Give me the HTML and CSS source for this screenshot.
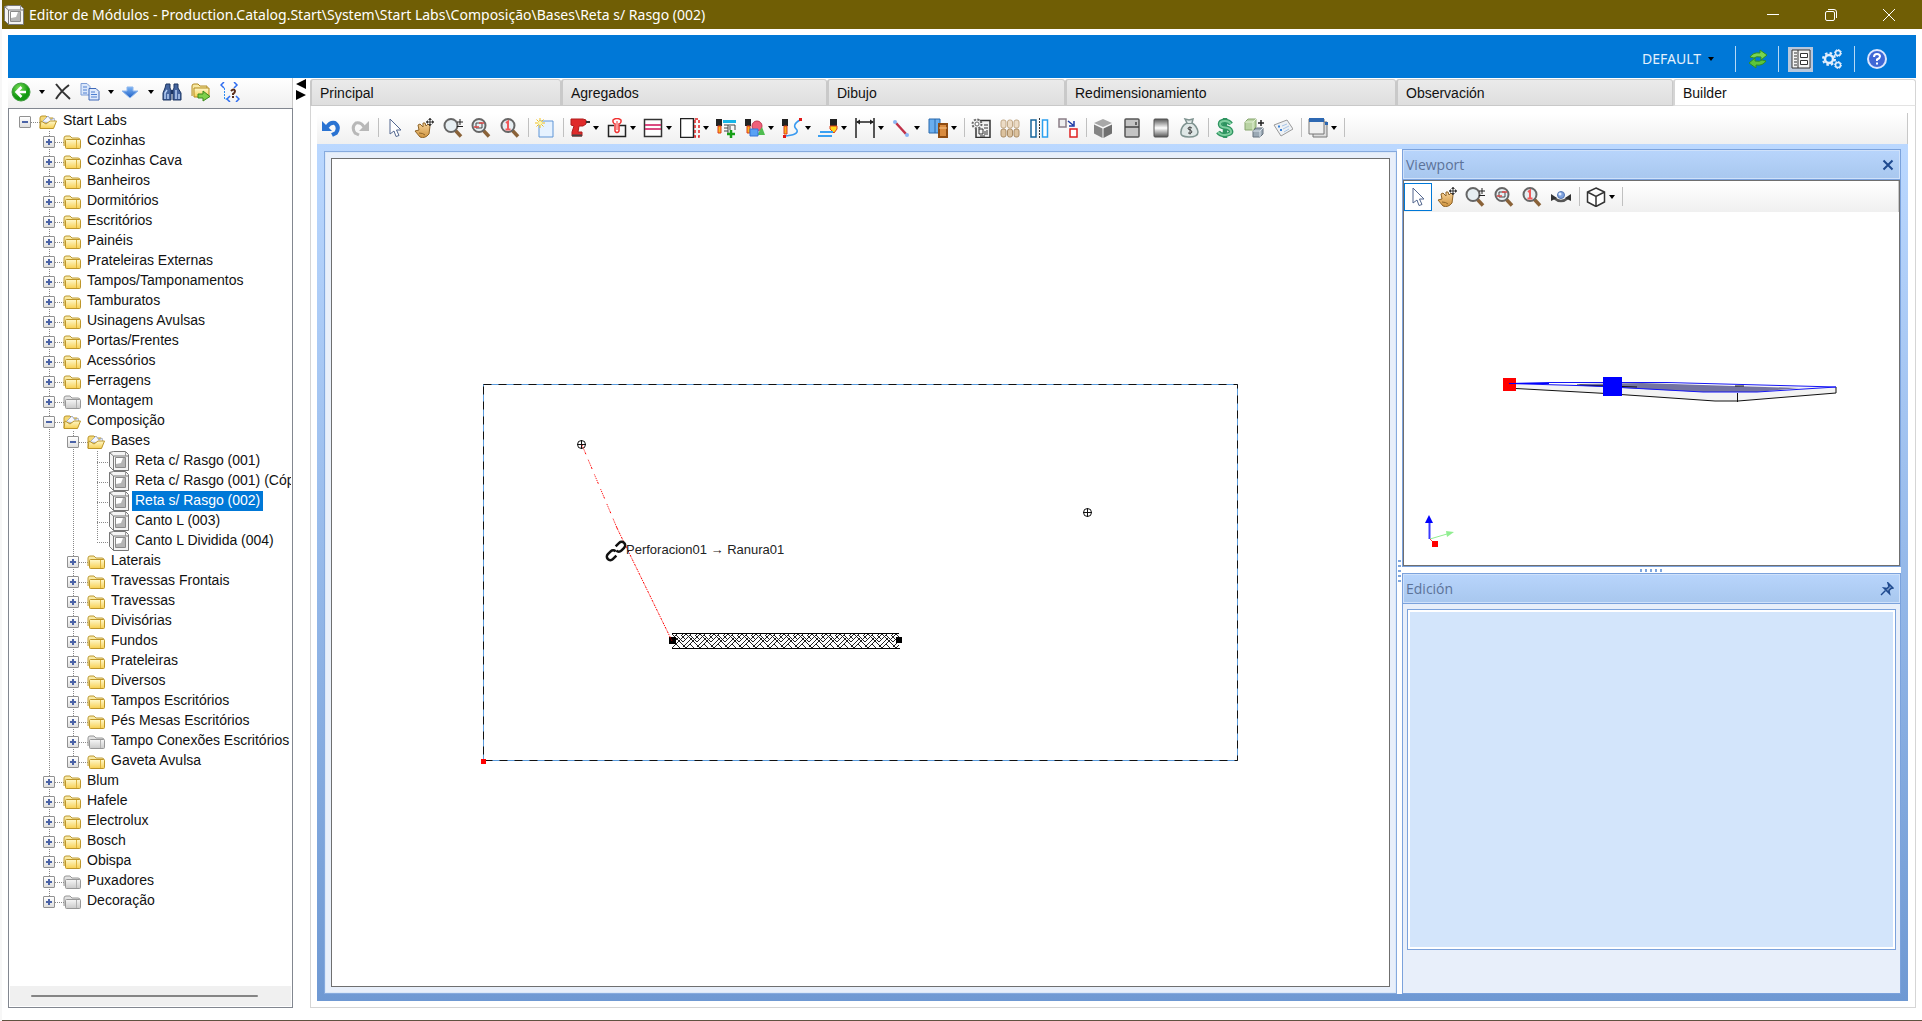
FILE: index.html
```html
<!DOCTYPE html>
<html lang="pt">
<head>
<meta charset="utf-8">
<title>Editor de Módulos</title>
<link rel="stylesheet" href="styles.css">
</head>
<body>
<svg class="defs" aria-hidden="true">
  <defs>
    <linearGradient id="gold" x1="0" y1="0" x2="0" y2="1"><stop offset="0" stop-color="#fff9cc"/><stop offset="1" stop-color="#f7cf52"/></linearGradient>
    <linearGradient id="silver" x1="0" y1="0" x2="0" y2="1"><stop offset="0" stop-color="#f7f7f7"/><stop offset="1" stop-color="#c9c9c9"/></linearGradient>
    <linearGradient id="skin" x1="0" y1="0" x2="0" y2="1"><stop offset="0" stop-color="#f6d39a"/><stop offset="1" stop-color="#cf933e"/></linearGradient>
    <linearGradient id="blueg" x1="0" y1="0" x2="0" y2="1"><stop offset="0" stop-color="#7db4f5"/><stop offset="1" stop-color="#1e5fc4"/></linearGradient>
    <linearGradient id="shine" x1="0" y1="0" x2="0" y2="1"><stop offset="0" stop-color="#555"/><stop offset=".5" stop-color="#fff"/><stop offset="1" stop-color="#555"/></linearGradient>
    <radialGradient id="greeng" cx=".4" cy=".3"><stop offset="0" stop-color="#7be05a"/><stop offset="1" stop-color="#149a12"/></radialGradient>
    <pattern id="weave" width="14" height="15" patternUnits="userSpaceOnUse" x="672" y="633">
      <path d="M0 6L4 2L11 9M4 2L6 0M11 9L14 6M0 1L7 8M0 11L7 4M3 4L0 1M7 8L14 1M9 2L14 7M0 15L4 11L8 15M4 11L11 4M7 8L14 15M11 14L14 11M9 0L11 2" stroke="#222" fill="none"/>
    </pattern>
  </defs>
  <symbol id="folder" viewBox="0 0 18 16"><path d="M1 12V4q0-2 2-2h4l2 2h6q2 0 2 2v6" fill="#f8e9a4" stroke="#bd9a35"/><rect x="2.500" y="5.500" width="15" height="9" rx="1" fill="url(#gold)" stroke="#bd962a"/><path d="M13.500 6v8" stroke="#dcb23d"/></symbol>
  <symbol id="folder-off" viewBox="0 0 18 16"><path d="M1 12V4q0-2 2-2h4l2 2h6q2 0 2 2v6" fill="#e2e2e2" stroke="#979797"/><rect x="2.500" y="5.500" width="15" height="9" rx="1" fill="url(#silver)" stroke="#979797"/><path d="M13.500 6v8" stroke="#b0b0b0"/></symbol>
  <symbol id="folder-open" viewBox="0 0 18 16"><path d="M1 14V4q0-2 2-2h4l2 2h5v10z" fill="#f3d878" stroke="#bd962a"/><path d="M3 8l6-6 3 4 3-2 1 5z" fill="#f6f8ff" stroke="#a5afc8"/><path d="M2 7l5 3 4-3h6.500l-3 7.500H1z" fill="url(#gold)" stroke="#bd962a"/></symbol>
  <symbol id="module" viewBox="0 0 20 20"><path d="M.5 1.500l4-1h12l3 3v16h-15l-4-4z" fill="#f4f4f4" stroke="#777"/><path d="M.5 1.500l4 3.500h15M4.500 5v14.500" fill="none" stroke="#777"/><path d="M16.500 .5V5" stroke="#999"/><path d="M6.500 6.500h10v10h-10z" fill="#fff" stroke="#8a8a8a"/><path d="M7 16v-3l5-1 2-5h2v9z" fill="#b4b4b4"/></symbol>
  <symbol id="back" viewBox="0 0 20 20"><circle cx="10" cy="10" r="9" fill="url(#greeng)" stroke="#3f9a3c"/><path d="M15 10H6M10.500 5l-5 5 5 5" fill="none" stroke="#fff" stroke-width="2.500"/></symbol>
  <symbol id="delete" viewBox="0 0 20 20"><path d="M3 2q6 8 14 15M16 3Q8 9 3 17" fill="none" stroke="#333" stroke-width="2"/></symbol>
  <symbol id="copy" viewBox="0 0 20 20"><path d="M1 1.500h6l3 3V13H1z" fill="#dbe8fb" stroke="#7d9dd6"/><path d="M9 6.500h7l3 3V18H9z" fill="#dfeafc" stroke="#3f69b8"/><path d="M3 5h4M3 8h4M3 11h4M11 10h4M11 12.500h6M11 15h6" stroke="#4e7fd0"/></symbol>
  <symbol id="down" viewBox="0 0 20 20"><path d="M7 5h6v4h5l-8 7-8-7h5z" fill="url(#blueg)" stroke="#8eb7ee"/></symbol>
  <symbol id="binoc" viewBox="0 0 20 20"><path d="M4 2h4v4l1 2v10H1v-7l2-5zM12 2h4v4l3 5v7h-8V8l1-2z" fill="#45659f" stroke="#1d3663"/><path d="M9 8h2v4H9z" fill="#1d3663"/><path d="M3 17v-6l2-3M14 17v-6l0-3M6 17v-5M17 17v-5" stroke="#b8d0f5" fill="none" stroke-width="1.500"/></symbol>
  <symbol id="folder-go" viewBox="0 0 20 20"><path d="M1 14V4q0-2 2-2h4l2 2h7v3" fill="#f8e9a4" stroke="#b08a22"/><path d="M3 6h15v9H3z" fill="url(#gold)" stroke="#b38a1c"/><path d="M7 12h5V9l7 5.500-7 4.500v-3H7z" fill="#7ed04a" stroke="#3c8a1d"/></symbol>
  <symbol id="xmlq" viewBox="0 0 20 20"><path d="M4 0L1 3l3 3M14 0l3 3-3 3M10 14l-3 3 3 3M16 14l3 3-3 3" fill="none" stroke="#2f6df0" stroke-width="1.500"/><path d="M4.500 6v11H8" fill="none" stroke="#2f8df0" stroke-dasharray="2 1"/><path d="M11 9q3-3 4 0 0 2-2 3v1M13 14v2" fill="none" stroke="#5a2d18" stroke-width="2"/></symbol>
  <symbol id="undo" viewBox="0 0 20 20"><path d="M6 9q3-5 8-4 5 4 1 10l-4 2" fill="none" stroke="#2a73d2" stroke-width="4"/><path d="M1 3v10h10z" fill="#2a73d2"/></symbol>
  <symbol id="redo" viewBox="0 0 20 20"><path d="M14 9q-3-5-8-4-5 4-1 10l4 2" fill="none" stroke="#b8b8b8" stroke-width="3"/><path d="M19 3v10H9z" fill="#b8b8b8"/></symbol>
  <symbol id="arrow" viewBox="0 0 20 20"><path d="M5 1v15l4-3 2 5.500 3-1-2.500-5.500H16z" fill="#fff" stroke="#53678f"/></symbol>
  <symbol id="hand" viewBox="0 0 20 20"><path d="M1 13l4-1-1-5 2-1 3 3 0-4 2 0 1 3 2-2 2 2-1 8q-4 5-9 3z" fill="url(#skin)" stroke="#8f6428"/><path d="M5 15q4 0 6 2" fill="none" stroke="#8f6428"/><path d="M16 0v8M12 4h8" stroke="#333"/><path d="M16 0l-2 2h4zM16 8l-2-2h4zM12 4l2-2v4zM20 4l-2-2v4z" fill="#333"/></symbol>
  <symbol id="lens" viewBox="0 0 20 20"><path d="M12 12l6 6.500" stroke="#8a6238" stroke-width="3.500"/><circle cx="8" cy="7.500" r="6.500" fill="#e6eef2" stroke="#666" stroke-width="2"/></symbol>
  <symbol id="zoom-pm" viewBox="0 0 20 20"><use href="#lens"/><path d="M14 4h6M17 1v6M14 8.500h6" stroke="#222"/></symbol>
  <symbol id="zoom-win" viewBox="0 0 20 20"><use href="#lens"/><path d="M5 5h6v5H5z" fill="none" stroke="#444"/><path d="M3 9h5M8 5h5" stroke="#e04848" stroke-width="1.500"/></symbol>
  <symbol id="zoom-one" viewBox="0 0 20 20"><use href="#lens"/><path d="M6 5l2-1.500V11M5.500 11.500h5" fill="none" stroke="#f25a5a" stroke-width="2"/></symbol>
  <symbol id="new" viewBox="0 0 20 20"><path d="M4 3h14v16H4z" fill="#e6f2ff" stroke="#5f95d6"/><path d="M5 0v10M0 5h10M1.500 1.500l7 7M8.500 1.500l-7 7" stroke="#f2c21c"/><circle cx="5" cy="5" r="2" fill="#fff7b0"/></symbol>
  <symbol id="drill" viewBox="0 0 20 20"><path d="M1 1h12l3 1v4l-3 2H9l-1 6h4v4H2v-4l2-6-3-1z" fill="#e02b2b" stroke="#b01c1c"/><path d="M16 4h4" stroke="#333" stroke-width="2"/><path d="M2 17.500h10" stroke="#444" stroke-width="2"/></symbol>
  <symbol id="pin" viewBox="0 0 20 20"><path d="M7 7.500H1.500v11h17v-11H12" fill="none" stroke="#222" stroke-width="1.500"/><path d="M6 2q4-3 8 0v2q-1 2-2 2v7q-2 3-4 0V6Q7 6 6 4z" fill="#fff" stroke="#f03030" stroke-width="1.500"/><path d="M10 3v9" stroke="#f03030"/></symbol>
  <symbol id="rows" viewBox="0 0 20 20"><path d="M1.500 1.500h17v17h-17z" fill="#fff" stroke="#333" stroke-width="1.500"/><path d="M2 7h16M2 11h16" stroke="#d0105a" stroke-width="1.500"/></symbol>
  <symbol id="cut" viewBox="0 0 20 20"><path d="M.5 .5h13v19H.5z" fill="#fff" stroke="#222" stroke-width="1.500"/><path d="M15 1h4v18h-4z" fill="none" stroke="#e02020" stroke-width="1.500" stroke-dasharray="3 2"/></symbol>
  <symbol id="mill-add" viewBox="0 0 20 20"><path d="M0 1h6v7H0z" fill="#222"/><path d="M2 8h3v7H2z" fill="#fbb21c" stroke="#e03a1c"/><path d="M7 2h13v3H7z" fill="#16b5e8"/><path d="M8 7h4v9M12 7h7v5M8 10h4M8 13h4M14 8v4" fill="none" stroke="#444"/><path d="M15 12v8M11 16h8" stroke="#18a018" stroke-width="2.500"/></symbol>
  <symbol id="mill-shape" viewBox="0 0 20 20"><path d="M0 1h6v7H0z" fill="#222"/><path d="M2 8h3v7H2z" fill="#fbb21c" stroke="#e03a1c"/><circle cx="12" cy="8" r="5" fill="#f0607a" stroke="#c03a50"/><path d="M12 17h8l-3-8z" fill="#4fbd50"/><path d="M5 11h8v7H5z" fill="#5aa2f5" stroke="#3474d8"/></symbol>
  <symbol id="mill-curve" viewBox="0 0 20 20"><path d="M0 1h6v7H0z" fill="#222"/><path d="M2 8h3v8H2z" fill="#fbb21c" stroke="#e03a1c"/><path d="M2 18q15-1 13-6-6-5 3-10" fill="none" stroke="#3a9af0" stroke-width="1.500"/><path d="M1 17h3v3H1zM17 0h3v3h-3z" fill="#e01818"/></symbol>
  <symbol id="edge" viewBox="0 0 20 20"><path d="M12 1h7v7h-7z" fill="#222"/><path d="M12 8h7v3l-3 4-4-4z" fill="#ffd91a" stroke="#e0401c"/><path d="M2 13h13v2H2zM0 17h14v2H0z" fill="#3aa0f2"/></symbol>
  <symbol id="dim" viewBox="0 0 20 20"><path d="M1 0v20M19 0v20M2 4h16" stroke="#222" stroke-width="1.500"/><path d="M1 4l4-2.500v5zM19 4l-4-2.500v5z" fill="#222"/></symbol>
  <symbol id="line" viewBox="0 0 20 20"><path d="M5 5l10 11" stroke="#c03048" stroke-width="2.500"/><circle cx="4" cy="4" r="2" fill="#8ab6f3"/><circle cx="16" cy="17" r="2" fill="#8ab6f3"/></symbol>
  <symbol id="boxes" viewBox="0 0 20 20"><path d="M1 1h11v14H1z" fill="#69aef0" stroke="#2b69ab"/><path d="M7 1v14" stroke="#2b69ab"/><path d="M11 6h8v13h-8z" fill="#d98b3f" stroke="#8f4c12" stroke-width="2"/><path d="M11 10h8" stroke="#f8c58a"/></symbol>
  <symbol id="gearsheet" viewBox="0 0 20 20"><path d="M5 2.500h14v17H5z" fill="#f2f2f2" stroke="#333" stroke-width="1.500"/><path d="M8 11h4v5H8zM13 7h4M13 10h4M14 13v4M16 12v5M9 18h5" fill="none" stroke="#333"/><circle cx="6" cy="6" r="4.500" fill="#eee" stroke="#666" stroke-width="2" stroke-dasharray="2 1.500"/><circle cx="6" cy="6" r="2" fill="#fff" stroke="#666"/></symbol>
  <symbol id="dowels" viewBox="0 0 20 20"><g fill="#ecdcc6" stroke="#c2a988"><rect x="1" y="2" width="5" height="8" rx="2"/><rect x="7.500" y="2" width="5" height="8" rx="2"/><rect x="14" y="2" width="5" height="8" rx="2"/></g><g fill="#dcc29e" stroke="#a98b64"><rect x="1" y="11" width="5" height="8" rx="2"/><rect x="7.500" y="11" width="5" height="8" rx="2"/><rect x="14" y="11" width="5" height="8" rx="2"/></g></symbol>
  <symbol id="mirror" viewBox="0 0 20 20"><path d="M2 2h5v17H2z" fill="#fff" stroke="#17659c" stroke-width="1.500"/><path d="M13.500 2h5v17h-5z" fill="#fff" stroke="#2ba0f0" stroke-width="1.500"/><path d="M10.500 0v20" stroke="#333" stroke-dasharray="2 1"/></symbol>
  <symbol id="swap" viewBox="0 0 20 20"><path d="M1 1h7v8H1z" fill="#eee" stroke="#8a7d86" stroke-width="1.500"/><path d="M12 11h7v8h-7z" fill="#fff" stroke="#e02222" stroke-width="1.500"/><path d="M10 3l5 4M16 3v5h-5" fill="none" stroke="#1c3aa5" stroke-width="1.500"/></symbol>
  <symbol id="cube-solid" viewBox="0 0 20 20"><path d="M1 5l9-4 9 4-9 4z" fill="#a8a8a8"/><path d="M1 6.500l8.500 4V20L1 15.500z" fill="#858585"/><path d="M19 6.500l-8.500 4V20l8.500-4.500z" fill="#707070"/></symbol>
  <symbol id="fridge" viewBox="0 0 20 20"><rect x="3" y="1" width="14" height="18" rx="1" fill="#c4c4c4" stroke="#555" stroke-width="1.500"/><path d="M3 9h14M14 4v3" stroke="#444" stroke-width="1.500"/></symbol>
  <symbol id="metal" viewBox="0 0 20 20"><rect x="3" y="1" width="14" height="18" rx="1" fill="url(#shine)" stroke="#555"/></symbol>
  <symbol id="bag" viewBox="0 0 20 20"><path d="M7 5L5 1l4 1 4-1-1 4q5 3 6 9 0 5-9 5t-8-5q0-6 6-9z" fill="#dfe7e6" stroke="#7f9390" stroke-width="1.500"/><path d="M6 5.500h7" stroke="#7f9390"/><path d="M12 10q-4-2-4 1 4 1 4 3 0 2-4 1M10 8.500v8" fill="none" stroke="#444"/></symbol>
  <symbol id="dollar" viewBox="0 0 20 20"><path d="M16 6q-2-3-6-3-5 0-5 3t5 3.500 6 3.500-6 4q-5 0-7-3M10 0v20" fill="none" stroke="#2e9460" stroke-width="4.500"/><path d="M16 6q-2-3-6-3-5 0-5 3t5 3.500 6 3.500-6 4q-5 0-7-3" fill="none" stroke="#7fcf9f" stroke-width="2"/></symbol>
  <symbol id="cubes" viewBox="0 0 20 20"><path d="M1 4l3-3h8v8l-3 3H1z" fill="#b9d3a3" stroke="#87a66e"/><path d="M1 4h8v8M9 4l3-3" fill="none" stroke="#e2f1d4"/><path d="M9 13l3-3h7v6l-3 3H9z" fill="#9ba9b5" stroke="#66727e"/><path d="M9 13h7v6M16 13l3-3" fill="none" stroke="#dbe4ec"/><path d="M17 2v6M14 5h6" stroke="#222" stroke-width="1.500"/></symbol>
  <symbol id="list" viewBox="0 0 20 20"><path d="M1 7l13-5 6 9-12 7z" fill="#eef1f4" stroke="#9a9a9a"/><path d="M5 8.500h2M7 12h2" stroke="#3b82d8" stroke-width="2"/><path d="M9 8l5-2M10 11l6-3M11 14l5-3" stroke="#a7c4e6"/></symbol>
  <symbol id="windows" viewBox="0 0 20 20"><path d="M5 4h14v15H5z" fill="#ddd" stroke="#777"/><path d="M1 1h15v15H1z" fill="#f0f0f0" stroke="#777"/><path d="M1 0h15v4H1zM17 4h3v3h-3z" fill="#2d68b2"/></symbol>
  <symbol id="orbit" viewBox="0 0 20 20"><path d="M3 11q7 6 14 0" fill="none" stroke="#555" stroke-width="2.500"/><path d="M0 7v7l6-3zM20 7v7l-6-3z" fill="#333"/><circle cx="10" cy="8" r="3.500" fill="#7fa2dd" stroke="#5276b5"/><circle cx="9" cy="7" r="1.500" fill="#e4eeff"/></symbol>
  <symbol id="cube-line" viewBox="0 0 20 20"><path d="M10 1l8.500 4v10L10 19.500 1.500 15V5zM1.500 5L10 9.500 18.500 5M10 9.500v10" fill="#fff" stroke="#333" stroke-width="1.500"/></symbol>
  <symbol id="refresh" viewBox="0 0 20 20"><path d="M2 8q3-5 10-4V1l7 5-6 5V8q-5-1-7 1z" fill="#79d451" stroke="#2f8f22"/><path d="M18 12q-3 5-10 4v3l-7-5 6-5v3q5 1 7-1z" fill="#5cc43a" stroke="#2f8f22"/></symbol>
  <symbol id="form" viewBox="0 0 20 20"><path d="M1 1h18v18H1z" fill="#f4f4f4" stroke="#333"/><path d="M7 1v18M3 4h3M3 7h3M3 10h3M3 13h3M3 16h3" stroke="#333"/><path d="M9.500 4.500h7v4h-7zM9.500 11.500h7v4h-7z" fill="#fff" stroke="#333"/></symbol>
  <symbol id="gears" viewBox="0 0 20 20"><g fill="none" stroke="#e3eefc"><circle cx="7" cy="10" r="4" stroke-width="2.500"/><circle cx="7" cy="10" r="6" stroke-width="2" stroke-dasharray="2.500 2.200"/><circle cx="16" cy="4" r="2.500" stroke-width="1.500"/><circle cx="16" cy="16" r="2.500" stroke-width="1.500"/><circle cx="16" cy="4" r="3.500" stroke-dasharray="1.500 1.200"/><circle cx="16" cy="16" r="3.500" stroke-dasharray="1.500 1.200"/></g></symbol>
  <symbol id="help" viewBox="0 0 20 20"><circle cx="10" cy="10" r="9" fill="#3f68d6" stroke="#dbe6ff" stroke-width="2"/><path d="M7 8q0-3 3-3t3 2.500q0 1.500-3 3V12M10 13.500v2" fill="none" stroke="#fff" stroke-width="2"/></symbol>
  <symbol id="pushpin" viewBox="0 0 14 14"><path d="M8 1l5 5-2 .5-2 2 .5 3L4 6l3 .5 2-2z" fill="#7f9dca" stroke="#1f4a8f" stroke-width="1.500"/><path d="M5.500 8.500L1 13" stroke="#1f4a8f" stroke-width="1.500"/></symbol>
</svg>

<div class="window">
  <header class="titlebar">
    <svg class="ic"><use href="#module"/></svg>
    <h1>Editor de Módulos - Production.Catalog.Start\System\Start Labs\Composição\Bases\Reta s/ Rasgo (002)</h1>
    <button class="wbtn" aria-label="Minimizar"><svg width="12" height="12"><path d="M0 5.500h12"/></svg></button>
    <button class="wbtn" aria-label="Restaurar"><svg width="12" height="12"><rect x=".5" y="2.500" width="9" height="9" rx="1.500"/><path d="M3 .5h6q2.500 0 2.500 2.500v6"/></svg></button>
    <button class="wbtn" aria-label="Fechar"><svg width="12" height="12"><path d="M0 0l12 12M12 0L0 12"/></svg></button>
  </header>

  <div class="client">
    <div class="banner">
      <button class="profile">DEFAULT<i class="caret"></i></button>
      <i class="bsep"></i>
      <button aria-label="Atualizar"><svg class="ic"><use href="#refresh"/></svg></button>
      <i class="bsep tight"></i>
      <button class="checked" aria-label="Formulário"><svg class="ic"><use href="#form"/></svg></button>
      <button class="gear" aria-label="Configurações"><svg class="ic"><use href="#gears"/></svg></button>
      <i class="bsep even"></i>
      <button aria-label="Ajuda"><svg class="ic"><use href="#help"/></svg></button>
    </div>

    <div class="workspace">
      <aside class="sidebar">
        <div class="sidetools">
          <button class="wide" aria-label="Voltar"><svg class="ic"><use href="#back"/></svg><i class="caret"></i></button>
          <button aria-label="Excluir"><svg class="ic"><use href="#delete"/></svg></button>
          <button class="wide" aria-label="Copiar"><svg class="ic"><use href="#copy"/></svg><i class="caret"></i></button>
          <button class="wide" aria-label="Baixar"><svg class="ic"><use href="#down"/></svg><i class="caret"></i></button>
          <button aria-label="Procurar"><svg class="ic"><use href="#binoc"/></svg></button>
          <button aria-label="Mover"><svg class="ic"><use href="#folder-go"/></svg></button>
          <button aria-label="XML"><svg class="ic"><use href="#xmlq"/></svg></button>
        </div>
        <nav class="treebox" aria-label="Catálogo">
          <ul class="tree">
            <li><div class="row"><button class="tw open" aria-label="Recolher"></button><svg class="fi"><use href="#folder-open"/></svg><span>Start Labs</span></div>
              <ul>
                <li><div class="row"><button class="tw" aria-label="Expandir"></button><svg class="fi"><use href="#folder"/></svg><span>Cozinhas</span></div></li>
                <li><div class="row"><button class="tw" aria-label="Expandir"></button><svg class="fi"><use href="#folder"/></svg><span>Cozinhas Cava</span></div></li>
                <li><div class="row"><button class="tw" aria-label="Expandir"></button><svg class="fi"><use href="#folder"/></svg><span>Banheiros</span></div></li>
                <li><div class="row"><button class="tw" aria-label="Expandir"></button><svg class="fi"><use href="#folder"/></svg><span>Dormitórios</span></div></li>
                <li><div class="row"><button class="tw" aria-label="Expandir"></button><svg class="fi"><use href="#folder"/></svg><span>Escritórios</span></div></li>
                <li><div class="row"><button class="tw" aria-label="Expandir"></button><svg class="fi"><use href="#folder"/></svg><span>Painéis</span></div></li>
                <li><div class="row"><button class="tw" aria-label="Expandir"></button><svg class="fi"><use href="#folder"/></svg><span>Prateleiras Externas</span></div></li>
                <li><div class="row"><button class="tw" aria-label="Expandir"></button><svg class="fi"><use href="#folder"/></svg><span>Tampos/Tamponamentos</span></div></li>
                <li><div class="row"><button class="tw" aria-label="Expandir"></button><svg class="fi"><use href="#folder"/></svg><span>Tamburatos</span></div></li>
                <li><div class="row"><button class="tw" aria-label="Expandir"></button><svg class="fi"><use href="#folder"/></svg><span>Usinagens Avulsas</span></div></li>
                <li><div class="row"><button class="tw" aria-label="Expandir"></button><svg class="fi"><use href="#folder"/></svg><span>Portas/Frentes</span></div></li>
                <li><div class="row"><button class="tw" aria-label="Expandir"></button><svg class="fi"><use href="#folder"/></svg><span>Acessórios</span></div></li>
                <li><div class="row"><button class="tw" aria-label="Expandir"></button><svg class="fi"><use href="#folder"/></svg><span>Ferragens</span></div></li>
                <li><div class="row"><button class="tw" aria-label="Expandir"></button><svg class="fi"><use href="#folder-off"/></svg><span>Montagem</span></div></li>
                <li><div class="row"><button class="tw open" aria-label="Recolher"></button><svg class="fi"><use href="#folder-open"/></svg><span>Composição</span></div>
                  <ul>
                    <li><div class="row"><button class="tw open" aria-label="Recolher"></button><svg class="fi"><use href="#folder-open"/></svg><span>Bases</span></div>
                      <ul>
                        <li><div class="row leaf"><svg class="ic"><use href="#module"/></svg><span>Reta c/ Rasgo (001)</span></div></li>
                        <li><div class="row leaf"><svg class="ic"><use href="#module"/></svg><span>Reta c/ Rasgo (001) (Cóp</span></div></li>
                        <li><div class="row leaf"><svg class="ic"><use href="#module"/></svg><span class="selected">Reta s/ Rasgo (002)</span></div></li>
                        <li><div class="row leaf"><svg class="ic"><use href="#module"/></svg><span>Canto L (003)</span></div></li>
                        <li><div class="row leaf"><svg class="ic"><use href="#module"/></svg><span>Canto L Dividida (004)</span></div></li>
                      </ul>
                    </li>
                    <li><div class="row"><button class="tw" aria-label="Expandir"></button><svg class="fi"><use href="#folder"/></svg><span>Laterais</span></div></li>
                    <li><div class="row"><button class="tw" aria-label="Expandir"></button><svg class="fi"><use href="#folder"/></svg><span>Travessas Frontais</span></div></li>
                    <li><div class="row"><button class="tw" aria-label="Expandir"></button><svg class="fi"><use href="#folder"/></svg><span>Travessas</span></div></li>
                    <li><div class="row"><button class="tw" aria-label="Expandir"></button><svg class="fi"><use href="#folder"/></svg><span>Divisórias</span></div></li>
                    <li><div class="row"><button class="tw" aria-label="Expandir"></button><svg class="fi"><use href="#folder"/></svg><span>Fundos</span></div></li>
                    <li><div class="row"><button class="tw" aria-label="Expandir"></button><svg class="fi"><use href="#folder"/></svg><span>Prateleiras</span></div></li>
                    <li><div class="row"><button class="tw" aria-label="Expandir"></button><svg class="fi"><use href="#folder"/></svg><span>Diversos</span></div></li>
                    <li><div class="row"><button class="tw" aria-label="Expandir"></button><svg class="fi"><use href="#folder"/></svg><span>Tampos Escritórios</span></div></li>
                    <li><div class="row"><button class="tw" aria-label="Expandir"></button><svg class="fi"><use href="#folder"/></svg><span>Pés Mesas Escritórios</span></div></li>
                    <li><div class="row"><button class="tw" aria-label="Expandir"></button><svg class="fi"><use href="#folder-off"/></svg><span>Tampo Conexões Escritórios</span></div></li>
                    <li><div class="row"><button class="tw" aria-label="Expandir"></button><svg class="fi"><use href="#folder"/></svg><span>Gaveta Avulsa</span></div></li>
                  </ul>
                </li>
                <li><div class="row"><button class="tw" aria-label="Expandir"></button><svg class="fi"><use href="#folder"/></svg><span>Blum</span></div></li>
                <li><div class="row"><button class="tw" aria-label="Expandir"></button><svg class="fi"><use href="#folder"/></svg><span>Hafele</span></div></li>
                <li><div class="row"><button class="tw" aria-label="Expandir"></button><svg class="fi"><use href="#folder"/></svg><span>Electrolux</span></div></li>
                <li><div class="row"><button class="tw" aria-label="Expandir"></button><svg class="fi"><use href="#folder"/></svg><span>Bosch</span></div></li>
                <li><div class="row"><button class="tw" aria-label="Expandir"></button><svg class="fi"><use href="#folder"/></svg><span>Obispa</span></div></li>
                <li><div class="row"><button class="tw" aria-label="Expandir"></button><svg class="fi"><use href="#folder-off"/></svg><span>Puxadores</span></div></li>
                <li><div class="row"><button class="tw" aria-label="Expandir"></button><svg class="fi"><use href="#folder-off"/></svg><span>Decoração</span></div></li>
              </ul>
            </li>
          </ul>
          <div class="hscroll"><i></i></div>
        </nav>
      </aside>

      <div class="splitter"><svg width="10" height="22"><path d="M10 0v10L0 5zM0 11v10l10-5z"/></svg></div>

      <main class="editor">
        <div class="tabs" role="tablist">
          <button role="tab">Principal</button>
          <button role="tab">Agregados</button>
          <button role="tab">Dibujo</button>
          <button role="tab">Redimensionamiento</button>
          <button role="tab">Observación</button>
          <button role="tab" aria-selected="true">Builder</button>
        </div>
        <div class="page">
          <div class="toolbar" role="toolbar">
            <div class="tools g2">
              <button aria-label="Deshacer"><svg class="ic"><use href="#undo"/></svg></button>
              <button aria-label="Rehacer"><svg class="ic"><use href="#redo"/></svg></button>
            </div>
            <i class="sep"></i>
            <div class="tools g5">
              <button aria-label="Seleccionar"><svg class="ic"><use href="#arrow"/></svg></button>
              <button aria-label="Mover"><svg class="ic"><use href="#hand"/></svg></button>
              <button aria-label="Zoom"><svg class="ic"><use href="#zoom-pm"/></svg></button>
              <button aria-label="Zoom ventana"><svg class="ic"><use href="#zoom-win"/></svg></button>
              <button aria-label="Zoom total"><svg class="ic"><use href="#zoom-one"/></svg></button>
            </div>
            <i class="sep"></i>
            <div class="tools"><button aria-label="Nuevo"><svg class="ic"><use href="#new"/></svg></button></div>
            <i class="sep"></i>
            <div class="tools g10">
              <button class="drop" aria-label="Perforación"><svg class="ic"><use href="#drill"/></svg><i class="caret"></i></button>
              <button class="drop" aria-label="Herraje"><svg class="ic"><use href="#pin"/></svg><i class="caret"></i></button>
              <button class="drop" aria-label="Ranura"><svg class="ic"><use href="#rows"/></svg><i class="caret"></i></button>
              <button class="drop" aria-label="Corte"><svg class="ic"><use href="#cut"/></svg><i class="caret"></i></button>
              <button aria-label="Fresado"><svg class="ic"><use href="#mill-add"/></svg></button>
              <button class="drop" aria-label="Formas"><svg class="ic"><use href="#mill-shape"/></svg><i class="caret"></i></button>
              <button class="drop" aria-label="Curva"><svg class="ic"><use href="#mill-curve"/></svg><i class="caret"></i></button>
              <button class="drop" aria-label="Canto"><svg class="ic"><use href="#edge"/></svg><i class="caret"></i></button>
              <button class="drop" aria-label="Cota"><svg class="ic"><use href="#dim"/></svg><i class="caret"></i></button>
              <button class="drop" aria-label="Línea"><svg class="ic"><use href="#line"/></svg><i class="caret"></i></button>
              <button class="drop" aria-label="Cajas"><svg class="ic"><use href="#boxes"/></svg><i class="caret"></i></button>
            </div>
            <i class="sep"></i>
            <div class="tools g4">
              <button aria-label="Propiedades"><svg class="ic"><use href="#gearsheet"/></svg></button>
              <button aria-label="Tarugos"><svg class="ic"><use href="#dowels"/></svg></button>
              <button aria-label="Espejo"><svg class="ic"><use href="#mirror"/></svg></button>
              <button aria-label="Cambiar"><svg class="ic"><use href="#swap"/></svg></button>
            </div>
            <i class="sep"></i>
            <div class="tools g4">
              <button aria-label="Módulo"><svg class="ic"><use href="#cube-solid"/></svg></button>
              <button aria-label="Frente"><svg class="ic"><use href="#fridge"/></svg></button>
              <button aria-label="Metal"><svg class="ic"><use href="#metal"/></svg></button>
              <button aria-label="Costo"><svg class="ic"><use href="#bag"/></svg></button>
            </div>
            <i class="sep"></i>
            <div class="tools g3">
              <button aria-label="Precio"><svg class="ic"><use href="#dollar"/></svg></button>
              <button aria-label="Piezas"><svg class="ic"><use href="#cubes"/></svg></button>
              <button aria-label="Lista"><svg class="ic"><use href="#list"/></svg></button>
            </div>
            <i class="sep"></i>
            <div class="tools"><button class="drop" aria-label="Ventanas"><svg class="ic"><use href="#windows"/></svg><i class="caret"></i></button></div>
            <i class="sep"></i>
          </div>

          <div class="dock">
            <section class="document">
              <svg class="canvas" role="img" aria-label="Pieza">
                <g transform="translate(-332 -159)">
                  <rect x="483.500" y="384.500" width="754" height="376" fill="none" stroke="#5b9bdc"/>
                  <rect x="483.500" y="384.500" width="754" height="376" fill="none" stroke="#111" stroke-dasharray="8 7"/>
                  <path d="M481 759h5v5h-5z" fill="#f00"/>
                  <g fill="#fff" stroke="#111"><circle cx="581.500" cy="444.500" r="4"/><path d="M577 444.500h9M581.500 440v9"/><circle cx="1087.500" cy="512.500" r="4"/><path d="M1083 512.500h9M1087.500 508v9"/></g>
                  <rect x="672" y="633" width="227" height="15" fill="url(#weave)"/>
                  <path d="M672 633.500h227M672 648.500h228" stroke="#000"/>
                  <path d="M669 637h7v7h-7zM896 637h6v6h-6z"/>
                  <path d="M582 445L617 528" stroke="#f00" stroke-dasharray="1 1 1 1 1 1 1 1 2 6" fill="none"/>
                  <path d="M617 528L672 641" stroke="#f00" stroke-dasharray="2 1 1 1" fill="none"/>
                  <g transform="translate(616 551) rotate(-45)" fill="none" stroke="#111" stroke-width="2.500"><path d="M-3 3.500h-5a3.500 3.500 0 0 1 0-7h4a3.500 3.500 0 0 1 3.500 3.500"/><path d="M3 -3.500h5a3.500 3.500 0 0 1 0 7H4a3.500 3.500 0 0 1-3.500-3.500"/></g>
                  <text x="626" y="554">Perforacion01 → Ranura01</text>
                </g>
              </svg>
            </section>

            <div class="vgrip"><i></i></div>

            <div class="panels">
              <section class="panel viewport">
                <header><h2>Viewport</h2><button aria-label="Cerrar"><svg width="12" height="12"><path d="M1.500 1.500l9 9M10.500 1.500l-9 9" stroke="#1f4a8f" stroke-width="2"/></svg></button></header>
                <div class="view">
                  <div class="viewtools">
                    <div class="tools g6">
                      <button class="active" aria-label="Seleccionar"><svg class="ic"><use href="#arrow"/></svg></button>
                      <button aria-label="Mover"><svg class="ic"><use href="#hand"/></svg></button>
                      <button aria-label="Zoom"><svg class="ic"><use href="#zoom-pm"/></svg></button>
                      <button aria-label="Zoom ventana"><svg class="ic"><use href="#zoom-win"/></svg></button>
                      <button aria-label="Zoom total"><svg class="ic"><use href="#zoom-one"/></svg></button>
                      <button aria-label="Orbitar"><svg class="ic"><use href="#orbit"/></svg></button>
                    </div>
                    <i class="sep"></i>
                    <div class="tools"><button class="drop" aria-label="Vista"><svg class="ic"><use href="#cube-line"/></svg><i class="caret"></i></button></div>
                    <i class="sep"></i>
                  </div>
                  <svg class="scene" role="img" aria-label="Vista 3D">
                    <g transform="translate(-1404 -213)">
                      <path d="M1510 385l106 0 220 3v6l-98 8h-22l-198-13z" fill="#f3f3f3"/>
                      <path d="M1578 385l64-1 157 5-42 4h-54l-120-6z" fill="#7474a0"/>
                      <path d="M1516 389.500l90 5 109 7.500h23l98-8v-6M1737.500 394v9M1577 386l60 2M1735 387h9" fill="none" stroke="#111"/>
                      <path d="M1509 384.500l40-1h118l169 4.500-79 5h-54l-110-6z" fill="none" stroke="#1414f5"/>
                      <path d="M1503 379h13v13h-13z" fill="#f00"/>
                      <path d="M1509 384.500h40" stroke="#00f"/>
                      <path d="M1603 378h19v19h-19z" fill="#00f"/>
                      <path d="M1429.500 540v-18" stroke="#3a3aff" stroke-width="2"/><path d="M1429 516l4 8h-8z" fill="#00f"/>
                      <path d="M1430 540l17-5" stroke="#90ee90"/><path d="M1454 533l-8-1 1 6z" fill="#90ee90"/>
                      <path d="M1430 540l4 4" stroke="#f44"/><path d="M1432 542h6v6h-6z" fill="#f00"/>
                    </g>
                  </svg>
                </div>
              </section>
              <div class="hgrip"><i></i></div>
              <section class="panel edit">
                <header><h2>Edición</h2><button aria-label="Fijar"><svg width="14" height="14"><use href="#pushpin"/></svg></button></header>
                <div class="editbody"><div class="well"></div></div>
              </section>
            </div>
          </div>
        </div>
      </main>
    </div>
  </div>
</div>
</body>
</html>
```
FILE: styles.css
```css
* { box-sizing: border-box; }
body { margin: 0; background: #f7f7f7; font: 14px/20px "Liberation Sans", Arial, sans-serif; color: #111; }
button { margin: 0; padding: 0; border: 0; background: none; font: inherit; color: inherit; display: flex; align-items: center; justify-content: center; }
h1, h2 { margin: 0; font-weight: 400; }
ul { list-style: none; margin: 0; padding: 0; }
svg { display: block; }
.defs { width: 0; height: 0; position: absolute; }
.ic { width: 20px; height: 20px; flex: none; }
.caret { width: 0; height: 0; border: 3px solid transparent; border-top: 4px solid #000; border-bottom: 0; flex: none; }

.window { min-height: 100vh; margin-left: 2px; display: flex; flex-direction: column; background: #fff; border-bottom: 1px solid #5f5240; }

.titlebar { height: 29px; display: flex; align-items: center; padding: 0 4px 0 2px; background: #705e05; color: #fff; }
.titlebar h1 { flex: 1; padding-left: 5px; font: 14px/20px "Noto Sans", "Open Sans", sans-serif; white-space: nowrap; }
.wbtn { width: 58px; height: 29px; }
.wbtn svg { fill: none; stroke: #fff; }

.client { flex: 1; display: flex; flex-direction: column; padding: 6px 6px 12px; }

.banner { height: 43px; display: flex; align-items: center; justify-content: flex-end; padding: 5px 29px 0 0; background: #0078d7; }
.banner button { height: 25px; }
.banner .profile { gap: 7px; color: #e4f0fc; font: 14px/20px "Noto Sans", "Open Sans", sans-serif; }
.bsep { width: 1px; height: 26px; margin: 0 12px 0 21px; background: #b5d8f5; }
.tight { margin: 0 9px 0 10px; }
.even { margin: 0 12px; }
.gear { margin-left: 9px; }
.checked { width: 25px; background: #b9c8dc; }

.workspace { flex: 1; display: flex; }
.sidebar { width: 285px; display: flex; flex-direction: column; }
.sidetools { height: 30px; display: flex; align-items: center; padding-bottom: 2px; border-right: 1px solid #c8c8c8; background: linear-gradient(#fff, #f0f0f0); }
.sidetools button { width: 29px; height: 28px; }
.sidetools .wide { width: 40px; gap: 8px; padding-left: 3px; justify-content: flex-start; }
.treebox { flex: 1; display: flex; flex-direction: column; justify-content: space-between; padding: 2px 1px 1px; border: 1px solid #828790; background: #fff; }
.tree { padding-left: 9px; overflow: hidden; }
.tree ul { padding-left: 24px; background: repeating-linear-gradient(#888 0 1px, transparent 1px 2px) 30px 0 / 1px calc(100% - 10px) no-repeat; }
.row { display: flex; height: 20px; white-space: nowrap; background: repeating-linear-gradient(90deg, #888 0 1px, transparent 1px 2px) 12px 11px / 10px 1px no-repeat; }
.row span { margin-left: 3px; padding: 0 3px; line-height: 19px; }
.row .selected { background: #0078d7; color: #fff; }
.fi { width: 18px; height: 16px; margin: 3px 0 0 8px; flex: none; }
.leaf { background-position: 6px 11px; background-size: 12px 1px; padding-left: 18px; }
.tw { width: 12px; height: 12px; margin-top: 5px; flex: none; border: 1px solid #919191; border-radius: 1px; background: linear-gradient(#4b63a7, #4b63a7) center / 6px 2px no-repeat, linear-gradient(#4b63a7, #4b63a7) center / 2px 6px no-repeat, linear-gradient(#fff, #dedede); }
.tw.open { background: linear-gradient(#4b63a7, #4b63a7) center / 6px 2px no-repeat, linear-gradient(#fff, #dedede); }
.hscroll { height: 20px; padding: 9px 33px 0 21px; background: #f0f0f0; }
.hscroll i { display: block; height: 2px; border-radius: 1px; background: #858585; }

.splitter { width: 17px; padding: 1px 0 0 3px; }

.editor { flex: 1; min-width: 0; display: flex; flex-direction: column; padding-top: 1px; }
.tabs { height: 27px; display: grid; grid-template-columns: 251fr 266fr 238fr 331fr 277fr 243fr; }
.tabs button { justify-content: flex-start; padding-left: 8px; border: 1px solid #c9c9c9; border-width: 1px 1px 1px 2px; border-radius: 3px 3px 0 0; background: linear-gradient(#ebebeb, #dedede); }
.tabs [aria-selected] { background: #fff; border-color: #d5d5d5 #d5d5d5 #e3e3e3; }
.page { flex: 1; display: flex; flex-direction: column; padding: 7px 7px 6px 6px; border: 1px solid #d5d5d5; border-top: 0; }

.toolbar { height: 31px; display: flex; align-items: center; padding-bottom: 2px; border-right: 1px solid #c8c8c8; background: linear-gradient(#fff, #f0f0f0); }
.tools { display: flex; justify-content: space-between; }
.tools button { width: 28px; height: 28px; }
.tools .drop { width: 36px; gap: 3px; padding-left: 4px; justify-content: flex-start; }
.sep { width: 1px; height: 19px; margin: 0 2px 0 4px; background: #c0c0c0; }
.g2 { width: 57px; }
.g3 { width: 86px; }
.g4 { width: 115px; }
.g5 { width: 143px; }
.g6 { width: 171px; }
.g10 { width: 394px; }

.dock { flex: 1; display: grid; grid-template-columns: 1fr 5px 499px; padding: 5px 7px 7px; background: linear-gradient(#bbd8ff, #6f99d3); }
.document { display: flex; margin-top: 2px; padding: 6px; border: 1px solid #86aade; outline: 1px solid #dbe8f8; outline-offset: -2px; background: #e8effa; }
.canvas { flex: 1; width: 100%; border: 1px solid #6f6f6f; background: #fff; }
.canvas text { font: 13px "Liberation Sans", Arial, sans-serif; fill: #222; }
.vgrip { display: flex; align-items: center; justify-content: center; background: #fff; }
.vgrip i { width: 3px; height: 24px; background: repeating-linear-gradient(#7ea6de 0 2px, #fff 2px 5px); }
.panels { display: flex; flex-direction: column; }
.panel { display: flex; flex-direction: column; border: 1px solid #7ba2dc; }
.panel header { height: 30px; display: flex; align-items: center; justify-content: space-between; padding: 0 6px 0 3px; border-bottom: 1px solid #7ba2dc; background: linear-gradient(#b8d5fc, #a8c7ee); box-shadow: inset 0 0 0 1px #cfe1fa; }
.panel h2 { font: 14px/20px "Open Sans", "Noto Sans", sans-serif; color: #5c7399; }
.viewport { height: 418px; }
.view { flex: 1; display: flex; flex-direction: column; border: 1px solid #6f6f6f; background: #fff; }
.viewtools { height: 31px; display: flex; align-items: center; border-right: 1px solid #c8c8c8; background: linear-gradient(#fff, #f0f0f0); }
.viewtools .active { border: 1px solid #0078d7; background: #fff; }
.scene { flex: 1; width: 100%; }
.hgrip { height: 6px; display: flex; align-items: center; justify-content: center; background: #fff; }
.hgrip i { width: 24px; height: 3px; background: repeating-linear-gradient(90deg, #7ea6de 0 2px, #fff 2px 5px); }
.edit { flex: 1; }
.editbody { flex: 1; display: flex; flex-direction: column; padding: 5px 4px 43px; background: #e8effa; }
.well { flex: 1; border: 1px solid #7ba2dc; box-shadow: inset 0 0 0 2px #fff; background: #d3e5fb; }
```
